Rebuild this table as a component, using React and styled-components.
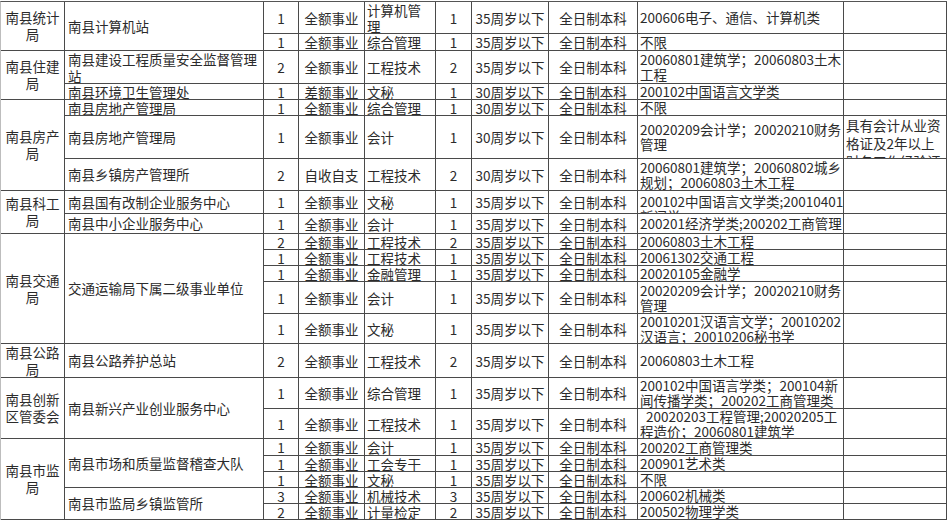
import React from 'react';
import styled, { createGlobalStyle } from 'styled-components';

const GlobalStyle = createGlobalStyle`
  html, body {
    margin: 0;
    padding: 0;
    background: #fff;
  }
  body {
    font-family: "Noto Sans CJK SC", "Liberation Serif", sans-serif;
  }
`;

const COLS = [
  { w: 64, align: 'center', lh: 17 },
  { w: 199, align: 'left', pl: 3, lh: 17 },
  { w: 35, align: 'center', lh: 16 },
  { w: 66, align: 'center', lh: 16 },
  { w: 71, align: 'left', pl: 2, lh: 16 },
  { w: 36, align: 'center', lh: 16 },
  { w: 77, align: 'center', lh: 16 },
  { w: 89, align: 'center', lh: 16 },
  { w: 206, align: 'left', pl: 2, lh: 15 },
  { w: 103, align: 'left', pl: 2, lh: 18 },
];

const ROW_HEIGHTS = [32, 17, 33, 16, 16, 43, 32, 23, 20, 16, 16, 16, 32, 30, 34, 31, 30, 17, 16, 16, 16, 16];

const A = '35周岁以下';
const B = '30周岁以下';
const K = '全日制本科';
const Q = '全额事业';

// each row: optional dept / unit cells with row spans, then the remaining eight columns
const rows = [
  { dept: ['南县统计\n局', 2], unit: ['南县计算机站', 2], cells: ['1', Q, '计算机管\n理', '1', A, K, '200606电子、通信、计算机类', ''] },
  { cells: ['1', Q, '综合管理', '1', A, K, '不限', ''] },
  { dept: ['南县住建\n局', 2], unit: ['南县建设工程质量安全监督管理\n站', 1], cells: ['2', Q, '工程技术', '2', A, K, '20060801建筑学；20060803土木\n工程', ''] },
  { unit: ['南县环境卫生管理处', 1], cells: ['1', '差额事业', '文秘', '1', B, K, '200102中国语言文学类', ''] },
  { dept: ['南县房产\n局', 3], unit: ['南县房地产管理局', 1], cells: ['1', Q, '综合管理', '1', B, K, '不限', ''] },
  { unit: ['南县房地产管理局', 1], cells: ['1', Q, '会计', '1', B, K, '20020209会计学；20020210财务\n管理', '具有会计从业资\n格证及2年以上\n财务工作经验证'] },
  { unit: ['南县乡镇房产管理所', 1], cells: ['2', '自收自支', '工程技术', '2', B, K, '20060801建筑学；20060802城乡\n规划；20060803土木工程', ''] },
  { dept: ['南县科工\n局', 2], unit: ['南县国有改制企业服务中心', 1], cells: ['1', Q, '文秘', '1', A, K, '200102中国语言文学类;20010401\n新闻学', ''], pt: 3 },
  { unit: ['南县中小企业服务中心', 1], cells: ['1', Q, '会计', '1', A, K, '200201经济学类;200202工商管理', ''] },
  { dept: ['南县交通\n局', 5], unit: ['交通运输局下属二级事业单位', 5], cells: ['2', Q, '工程技术', '2', A, K, '20060803土木工程', ''] },
  { cells: ['1', Q, '工程技术', '1', A, K, '20061302交通工程', ''] },
  { cells: ['1', Q, '金融管理', '1', A, K, '20020105金融学', ''] },
  { cells: ['1', Q, '会计', '1', A, K, '20020209会计学；20020210财务\n管理', ''] },
  { cells: ['1', Q, '文秘', '1', A, K, '20010201汉语言文学；20010202\n汉语言；20010206秘书学', ''] },
  { dept: ['南县公路\n局', 1], unit: ['南县公路养护总站', 1], cells: ['2', Q, '工程技术', '2', A, K, '20060803土木工程', ''] },
  { dept: ['南县创新\n区管委会', 2], unit: ['南县新兴产业创业服务中心', 2], cells: ['1', Q, '综合管理', '1', A, K, '200102中国语言学类；200104新\n闻传播学类；200202工商管理类', ''] },
  { cells: ['1', Q, '工程技术', '1', A, K, '\u00a0\u00a020020203工程管理;20020205工\n程造价；20060801建筑学', ''] },
  { dept: ['南县市监\n局', 5], unit: ['南县市场和质量监督稽查大队', 3], cells: ['1', Q, '会计', '1', A, K, '200202工商管理类', ''] },
  { cells: ['1', Q, '工会专干', '1', A, K, '200901艺术类', ''] },
  { cells: ['1', Q, '文秘', '1', A, K, '不限', ''] },
  { unit: ['南县市监局乡镇监管所', 2], cells: ['3', Q, '机械技术', '3', A, K, '200602机械类', ''] },
  { cells: ['2', Q, '计量检定', '2', A, K, '200502物理学类', ''] },
];

const Page = styled.div`
  padding-top: 1px;
  width: 950px;
`;

const Sheet = styled.div`
  display: grid;
  grid-template-columns: ${COLS.map((c) => `${c.w}px`).join(' ')};
  grid-template-rows: ${ROW_HEIGHTS.map((h) => `${h}px`).join(' ')};
  width: max-content;
  border-top: 1px solid #555;
  border-left: 1px solid #bdbdbd;
  color: #2b2b2b;
  font-size: 13.5px;
`;

const Cell = styled.div`
  box-sizing: border-box;
  display: flex;
  flex-direction: column;
  overflow: hidden;
  border-right: 1px solid #4a4a4a;
  border-bottom: 1px solid #4a4a4a;
  padding-left: ${(p) => p.$pl || 0}px;
  padding-top: ${(p) => p.$pt || 0}px;
  text-align: ${(p) => p.$align};
  line-height: ${(p) => p.$lh}px;
`;

const CellText = styled.span`
  margin: auto 0;
  white-space: pre;
`;

function SheetCell({ col, row, span, text, pt }) {
  const c = COLS[col];
  return (
    <Cell
      $align={c.align}
      $lh={c.lh}
      $pl={c.pl}
      $pt={pt}
      style={{ gridColumn: col + 1, gridRow: `${row} / span ${span}` }}>
      <CellText>{text}</CellText>
    </Cell>
  );
}

export default function App() {
  const cells = [];
  rows.forEach((r, i) => {
    const row = i + 1;
    if (r.dept) {
      cells.push(<SheetCell key={`d${i}`} col={0} row={row} span={r.dept[1]} text={r.dept[0]} />);
    }
    if (r.unit) {
      cells.push(<SheetCell key={`u${i}`} col={1} row={row} span={r.unit[1]} text={r.unit[0]} />);
    }
    r.cells.forEach((t, j) => {
      cells.push(
        <SheetCell
          key={`c${i}-${j}`}
          col={j + 2}
          row={row}
          span={1}
          text={t}
          pt={j === 6 ? r.pt : 0} />
      );
    });
  });

  return (
    <Page>
      <GlobalStyle />
      <Sheet>{cells}</Sheet>
    </Page>
  );
}
